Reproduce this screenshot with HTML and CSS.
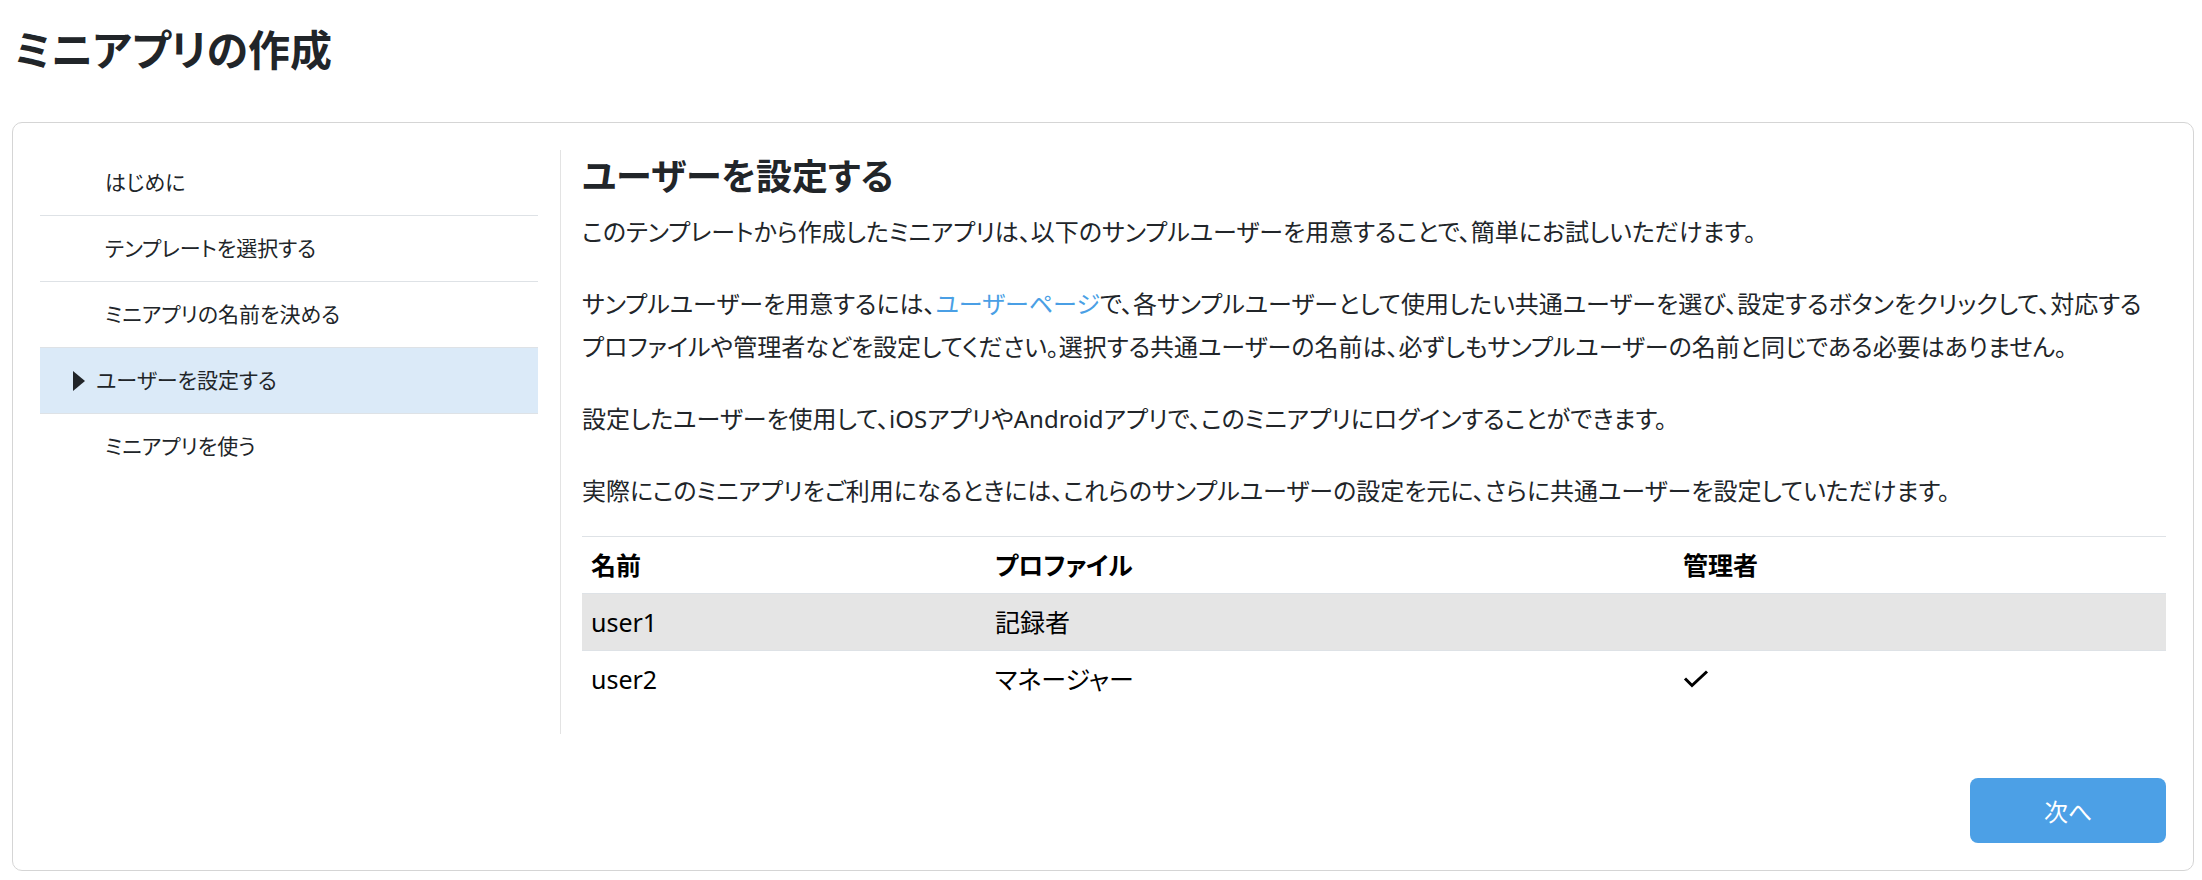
FILE: index.html
```html
<!DOCTYPE html>
<html lang="ja">
<head>
  <meta charset="UTF-8">
  <title>ミニアプリの作成</title>
  <link rel="stylesheet" href="styles.css">
</head>
<body>
<h1 class="page-title">ミニアプリの作成</h1>
<div class="card">
  <div class="wizard">
    <ul class="steps">
      <li class="step">はじめに</li>
      <li class="step">テンプレートを選択する</li>
      <li class="step">ミニアプリの名前を決める</li>
      <li class="step active">ユーザーを設定する</li>
      <li class="step">ミニアプリを使う</li>
    </ul>
    <div class="content">
      <h2>ユーザーを設定する</h2>
      <p>このテンプレートから作成したミニアプリは、以下のサンプルユーザーを用意することで、簡単にお試しいただけます。</p>
      <p>サンプルユーザーを用意するには、<a href="#">ユーザーページ</a>で、各サンプルユーザーとして使用したい共通ユーザーを選び、設定するボタンをクリックして、対応するプロファイルや管理者などを設定してください。選択する共通ユーザーの名前は、必ずしもサンプルユーザーの名前と同じである必要はありません。</p>
      <p>設定したユーザーを使用して、iOSアプリやAndroidアプリで、このミニアプリにログインすることができます。</p>
      <p>実際にこのミニアプリをご利用になるときには、これらのサンプルユーザーの設定を元に、さらに共通ユーザーを設定していただけます。</p>
      <table class="users">
        <thead>
          <tr>
            <th class="col-name">名前</th>
            <th class="col-profile">プロファイル</th>
            <th>管理者</th>
          </tr>
        </thead>
        <tbody>
          <tr class="striped">
            <td>user1</td>
            <td>記録者</td>
            <td></td>
          </tr>
          <tr>
            <td>user2</td>
            <td>マネージャー</td>
            <td>
              <svg class="check" width="26" height="18" viewBox="0 0 26 18">
                <polyline points="2,8.5 9,15.5 24,1.5" fill="none" stroke="#000" stroke-width="3"/>
              </svg>
            </td>
          </tr>
        </tbody>
      </table>
    </div>
  </div>
  <div class="actions">
    <button class="next">次へ</button>
  </div>
</div>
</body>
</html>
```

FILE: styles.css
```css
html, body {
  margin: 0;
  padding: 0;
}

body {
  padding: 0 8px 0 12px;
  font-family: "Noto Sans", "Noto Sans CJK JP", sans-serif;
  font-feature-settings: "palt";
  font-size: 24px;
  color: #212529;
  background: #fff;
}

.page-title {
  font-size: 42px;
  font-weight: bold;
  line-height: 56px;
  margin: 0;
  padding: 22px 0 44px 2px;
}

.card {
  border: 1px solid #d5d5d5;
  border-radius: 10px;
  padding: 27px;
  height: 749px;
  box-sizing: border-box;
  display: flex;
  flex-direction: column;
}

.wizard {
  display: flex;
  flex-direction: row;
  align-items: flex-start;
}

.steps {
  list-style: none;
  margin: 0;
  padding: 0;
  width: 498px;
  flex: none;
  font-size: 21px;
}

.step {
  height: 65px;
  line-height: 65px;
  padding-left: 65px;
  border-bottom: 1px solid #dee2e6;
}

.step:last-child {
  border-bottom: none;
}

.step.active {
  background: #dbeaf8;
  padding-left: 33px;
  display: flex;
  align-items: center;
  gap: 11px;
}

.step.active::before {
  content: "";
  border-left: 12px solid #212529;
  border-top: 10px solid transparent;
  border-bottom: 10px solid transparent;
}

.content {
  flex: 1;
  margin-left: 22px;
  padding-left: 21px;
  border-left: 1px solid #e3e3e3;
}

.content h2 {
  font-size: 36px;
  font-weight: bold;
  line-height: 44px;
  margin: 5px 0 11px;
}

.content p {
  margin: 0 12px 29px 0;
  line-height: 43px;
}

.content p:last-of-type {
  margin-bottom: 24px;
}

.content a {
  color: #4a9fe5;
  text-decoration: none;
}

.users {
  width: 100%;
  border-collapse: collapse;
  border-top: 1px solid #dee2e6;
  margin-bottom: 27px;
  font-size: 25px;
  color: #000;
}

.users th,
.users td {
  text-align: left;
  padding: 10px 9px;
  line-height: 36px;
  height: 36px;
}

.users th {
  font-weight: bold;
}

.users .col-name {
  width: 386px;
}

.users .col-profile {
  width: 670px;
}

.users tbody tr {
  border-top: 1px solid #dee2e6;
}

.users tr.striped {
  background: #e5e5e5;
}

.check {
  display: block;
}

.actions {
  margin-top: auto;
  display: flex;
  justify-content: flex-end;
}

.next {
  width: 196px;
  height: 65px;
  border: none;
  border-radius: 8px;
  background: #4ca0e6;
  color: #fff;
  font-family: "Noto Sans CJK JP", sans-serif;
  font-size: 24px;
  cursor: pointer;
}
```
